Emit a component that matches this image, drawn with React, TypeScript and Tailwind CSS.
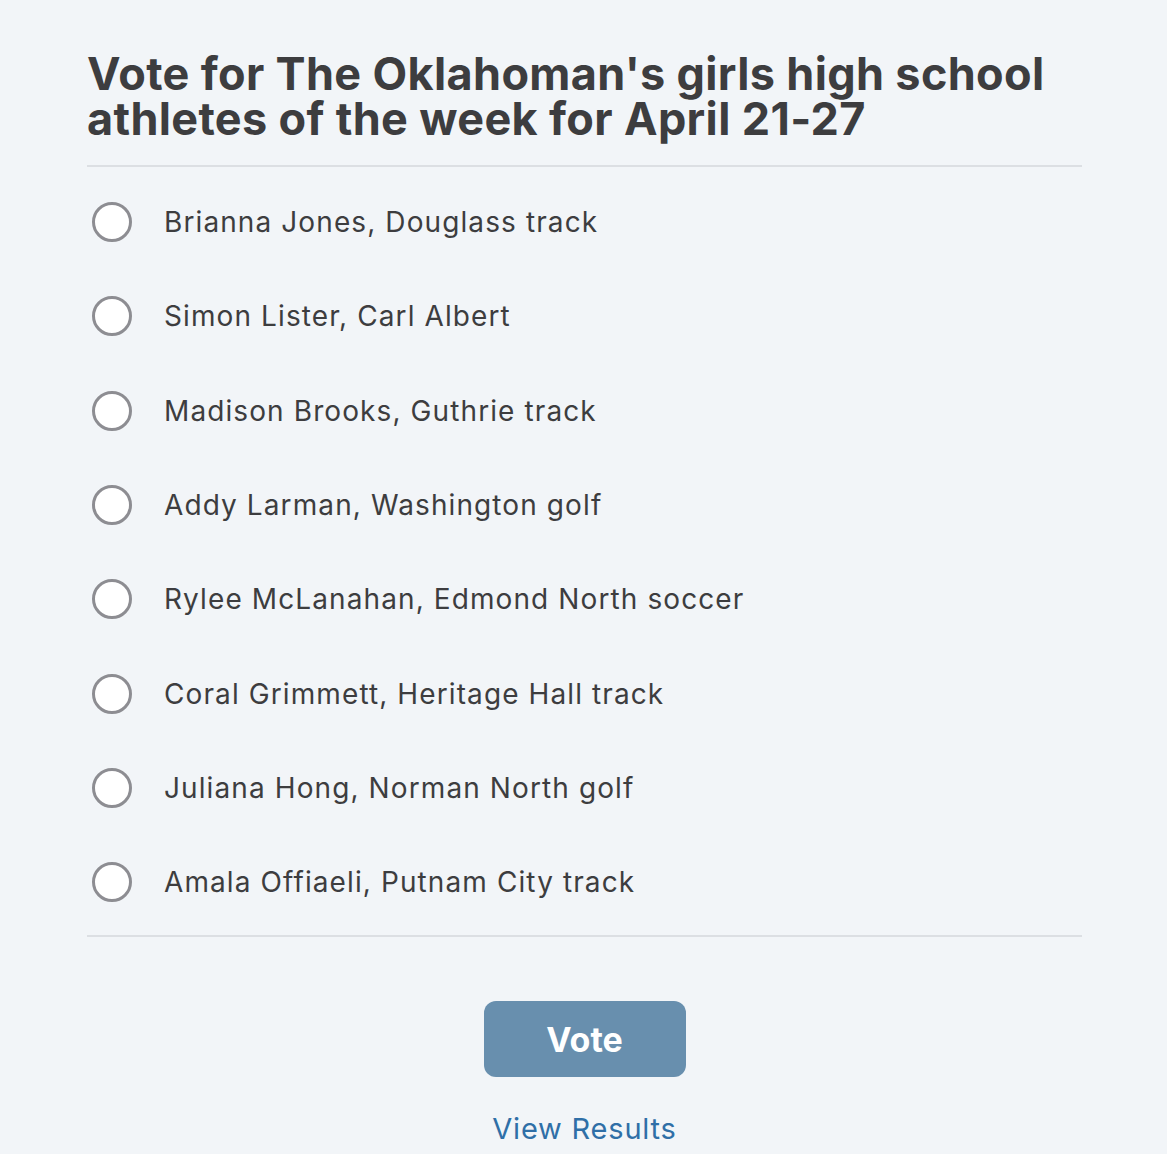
import React from "react";

const options = [
  "Brianna Jones, Douglass track",
  "Simon Lister, Carl Albert",
  "Madison Brooks, Guthrie track",
  "Addy Larman, Washington golf",
  "Rylee McLanahan, Edmond North soccer",
  "Coral Grimmett, Heritage Hall track",
  "Juliana Hong, Norman North golf",
  "Amala Offiaeli, Putnam City track",
];

export default function App() {
  return (
    <div
      className="min-h-[1154px] w-full bg-[#f2f5f8] text-[#3c3c3e]"
      style={{ fontFamily: "Inter, 'Noto Sans', sans-serif" }}
    >
      <div className="ml-[87px] w-[995px] pt-[51px]">
        <h1 className="text-[45px] font-bold leading-[45px] tracking-[0.35px] text-[#3d3d3f]">
          Vote for The Oklahoman's girls high school athletes of the week for April 21-27
        </h1>
        <div className="mt-[24px] h-[2px] bg-[#dcdfe3]" />
        <div className="pt-[8px] pb-[6px]">
          {options.map((o) => (
            <label key={o} className="flex h-[94.3px] items-center">
              <span className="ml-[5px] box-border h-[40px] w-[40px] shrink-0 rounded-full border-[3px] border-[#8d8d92] bg-white" />
              <span className="ml-[32px] text-[28px] tracking-[1.1px] text-[#3d3d3f]">{o}</span>
            </label>
          ))}
        </div>
        <div className="h-[2px] bg-[#dcdfe3]" />
        <div className="flex flex-col items-center">
          <button className="mt-[64px] h-[76px] w-[202px] rounded-[12px] bg-[#688fae] text-[34px] font-bold text-white">
            Vote
          </button>
          <div className="mt-[30px] text-[29px] tracking-[0.8px] text-[#2f6fa7]">View Results</div>
        </div>
      </div>
    </div>
  );
}
